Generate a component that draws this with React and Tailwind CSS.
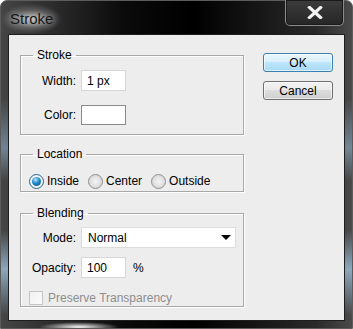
import React from 'react';

const font = 'font-["Liberation_Sans",Arial,sans-serif]';

const Radio = ({ checked, label }) => (
  <label className="flex items-center gap-[3px]">
    {checked ? (
      <span className="w-[15px] h-[15px] rounded-full border border-[#2c628b] bg-[radial-gradient(circle_at_50%_50%,#fff,#e6eef4)] flex items-center justify-center">
        <span className="w-[9px] h-[9px] rounded-full bg-[radial-gradient(circle_at_40%_30%,#bfe6ff,#1b88cc_45%,#0a4f86)]" />
      </span>
    ) : (
      <span className="w-[15px] h-[15px] rounded-full border border-[#8e8f8f] bg-[radial-gradient(circle_at_50%_50%,#f4f4f4,#dadada_70%,#efefef)]" />
    )}
    <span>{label}</span>
  </label>
);

const Group = ({ title, className, children }) => (
  <fieldset
    className={`border border-[#a8a8a8] shadow-[inset_1px_1px_0_#fff,1px_1px_0_#fff] ${className}`}
  >
    <legend className="ml-[12px] px-[4px] leading-[14px]">{title}</legend>
    {children}
  </fieldset>
);

const Field = ({ className = '', children }) => (
  <div
    className={`bg-white border border-[#d6d6d6] h-[21px] flex items-center pl-[5px] ${className}`}
  >
    {children}
  </div>
);

export default function App() {
  return (
    <div
      className={`${font} text-[12px] text-black w-[353px] h-[329px] flex flex-col rounded-t-[7px] border border-[#5c5c5c] bg-[radial-gradient(ellipse_40px_5px_at_78px_326px,rgba(255,255,255,0.95),transparent),linear-gradient(180deg,transparent_30%,rgba(150,185,215,0.55)_45%,transparent_55%,transparent_70%,rgba(170,210,240,0.7)_82%,transparent_96%),linear-gradient(90deg,#454545,#0a0a0a_35%,#000_55%,#2a2a2a_90%,#4a4a4a)]`}
    >
      <div className="h-[33px] flex items-start justify-between shrink-0">
        <div className="mt-[3px] px-[9px] h-[30px] flex items-center bg-[radial-gradient(ellipse_closest-side_at_center,rgba(220,220,220,0.8),rgba(150,150,150,0.35)_60%,transparent)]">
          <span className="text-[15px] text-[#151515] [text-shadow:0_0_6px_rgba(255,255,255,0.7)]">
            Stroke
          </span>
        </div>
        <div className="mr-[8px] -mt-px w-[59px] h-[26px] rounded-b-[5px] border border-t-0 border-[#8c8c8c] bg-[linear-gradient(180deg,#3c3c3c,#262626)] shadow-[inset_0_0_0_1px_#1a1a1a] flex items-center justify-center">
          <svg width="16" height="13" viewBox="0 0 16 13">
            <path d="M2.5 1.5 L13.5 11.5 M13.5 1.5 L2.5 11.5" stroke="#f2f2f2" strokeWidth="3.2" strokeLinecap="square" />
          </svg>
        </div>
      </div>

      <div className="mx-[7px] mb-[7px] flex-1 border border-[#1e1e1e] bg-[#ededed] flex pl-[11px] pt-[13px]">
        <div className="w-[224px] flex flex-col">
          <Group title="Stroke" className="h-[87px]">
            <div className="mt-[8px] flex items-center gap-[5px]">
              <span className="w-[55px] text-right">Width:</span>
              <Field className="w-[45px]">1 px</Field>
            </div>
            <div className="mt-[14px] flex items-center gap-[5px]">
              <span className="w-[55px] text-right">Color:</span>
              <div className="w-[45px] h-[20px] bg-white border border-[#8a8a8a]" />
            </div>
          </Group>

          <Group title="Location" className="mt-[12px] h-[45px]">
            <div className="mt-[11px] pl-[8px] flex items-center gap-[9px]">
              <Radio checked label="Inside" />
              <Radio label="Center" />
              <Radio label="Outside" />
            </div>
          </Group>

          <Group title="Blending" className="mt-[14px] h-[101px]">
            <div className="mt-[7px] flex items-center gap-[5px]">
              <span className="w-[55px] text-right">Mode:</span>
              <div className="w-[155px] h-[21px] bg-white border border-[#dcdcdc] flex items-center justify-between pl-[6px] pr-[4px]">
                <span>Normal</span>
                <svg width="10" height="5" viewBox="0 0 10 5">
                  <path d="M0 0 H10 L5 5 Z" fill="#000" />
                </svg>
              </div>
            </div>
            <div className="mt-[9px] flex items-center gap-[5px]">
              <span className="w-[57px] text-right -ml-[2px]">Opacity:</span>
              <Field className="w-[45px]">100</Field>
              <span className="ml-[2px]">%</span>
            </div>
            <div className="mt-[11px] pl-[8px] flex items-center gap-[5px] text-[#8d8d8d]">
              <span className="w-[14px] h-[14px] border border-[#c4c4c4] bg-[linear-gradient(135deg,#f0f0f0,#fafafa)]" />
              <span>Preserve Transparency</span>
            </div>
          </Group>
        </div>

        <div className="ml-[19px] mt-[5px] flex flex-col gap-[9px]">
          <button className="w-[70px] h-[19px] rounded-[3px] border border-[#3c7fb1] bg-[linear-gradient(180deg,#eaf6fd,#d9f0fc_45%,#bee6fd_50%,#a7d9f5)] shadow-[inset_0_0_0_1px_rgba(255,255,255,0.6)] leading-none">
            OK
          </button>
          <button className="w-[70px] h-[19px] rounded-[3px] border border-[#707070] bg-[linear-gradient(180deg,#f2f2f2,#ebebeb_45%,#dddddd_50%,#cfcfcf)] shadow-[inset_0_0_0_1px_rgba(255,255,255,0.6)] leading-none">
            Cancel
          </button>
        </div>
      </div>
    </div>
  );
}
